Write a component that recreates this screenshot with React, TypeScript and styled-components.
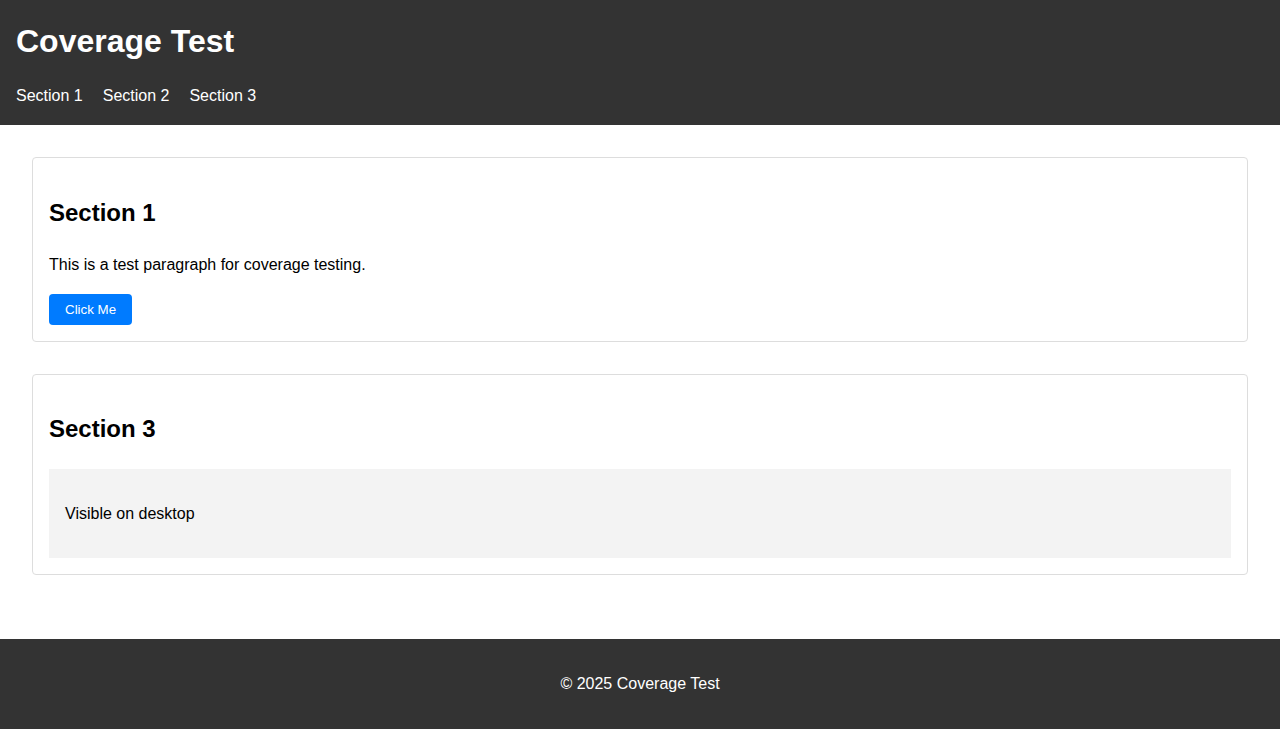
import styled, { createGlobalStyle } from "styled-components";

const GlobalStyle = createGlobalStyle`
  body {
    margin: 0;
    font-family: "Liberation Sans", Arial, sans-serif;
    line-height: 1.6;
    color: #000;
    background: #fff;
  }
`;

const sections = ["Section 1", "Section 2", "Section 3"];

const App: React.FC = () => {
  return (
    <>
      <GlobalStyle />
      <StyledHeader>
        <h1>Coverage Test</h1>
        <StyledNav>
          {sections.map((s) => (
            <a key={s} href={`#${s.toLowerCase().replace(" ", "")}`}>
              {s}
            </a>
          ))}
        </StyledNav>
      </StyledHeader>

      <StyledMain>
        <StyledCard id="section1">
          <h2>Section 1</h2>
          <p>This is a test paragraph for coverage testing.</p>
          <StyledButton type="button">Click Me</StyledButton>
        </StyledCard>

        <StyledCard id="section3">
          <h2>Section 3</h2>
          <StyledPanel>
            <p>Visible on desktop</p>
          </StyledPanel>
        </StyledCard>
      </StyledMain>

      <StyledFooter>
        <p>&copy; 2025 Coverage Test</p>
      </StyledFooter>
    </>
  );
};

export default App;

const StyledHeader = styled.header`
  background: #333;
  color: #fff;
  padding: 1rem;

  h1 {
    margin: 0;
    font-size: 2em;
  }
`;

const StyledNav = styled.nav`
  margin-top: 1rem;
  display: flex;
  gap: 20px;

  a {
    color: #fff;
    text-decoration: none;
  }
`;

const StyledMain = styled.main`
  padding: 2rem;
`;

const StyledCard = styled.section`
  border: 1px solid #ddd;
  border-radius: 4px;
  padding: 1rem;
  margin-bottom: 2rem;

  h2 {
    font-size: 1.5em;
    margin: 0.83em 0;
  }

  p {
    margin: 1rem 0;
  }
`;

const StyledButton = styled.button`
  background: #007bff;
  color: #fff;
  border: none;
  border-radius: 4px;
  padding: 8px 16px;
  font-family: "Liberation Sans", Arial, sans-serif;
  font-size: 13.333px;
  line-height: normal;
  cursor: pointer;
`;

const StyledPanel = styled.div`
  background: #f3f3f3;
  padding: 1rem;
`;

const StyledFooter = styled.footer`
  background: #333;
  color: #fff;
  text-align: center;
  padding: 1rem;

  p {
    margin: 1rem 0;
  }
`;
